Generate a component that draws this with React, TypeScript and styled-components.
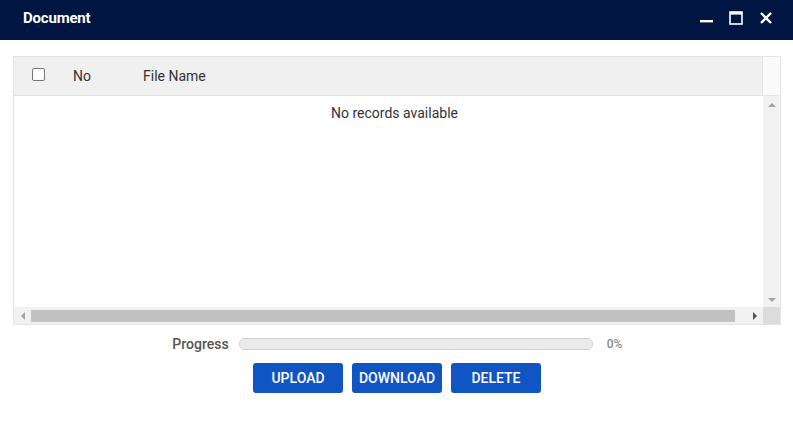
import styled, { createGlobalStyle } from "styled-components";

const GlobalStyle = createGlobalStyle`
  body {
    margin: 0;
    background: #ffffff;
    font-family: Roboto, "Liberation Sans", Arial, sans-serif;
  }
`;

const App = () => {
  return (
    <>
      <GlobalStyle />
      <Window>
        {/*--------------------------- Title bar -------------------------------- */}
        <TitleBar>
          <Title>Document</Title>
          <WindowActions>
            <ActionButton aria-label="minimize">
              <svg width="13" height="13" viewBox="0 0 13 13">
                <rect x="0" y="9" width="13" height="2.4" fill="#fff" />
              </svg>
            </ActionButton>
            <ActionButton aria-label="maximize">
              <svg width="14" height="14" viewBox="0 0 14 14">
                <rect x="1" y="1" width="12" height="12" fill="none" stroke="#fff" strokeWidth="1.6" />
                <rect x="1" y="1" width="12" height="2.6" fill="#fff" />
              </svg>
            </ActionButton>
            <ActionButton aria-label="close">
              <svg width="14" height="14" viewBox="0 0 14 14">
                <path d="M2 2 L12 12 M12 2 L2 12" stroke="#fff" strokeWidth="2.4" />
              </svg>
            </ActionButton>
          </WindowActions>
        </TitleBar>
        {/*--------------------------- Content -------------------------------- */}
        <Content>
          <Grid>
            <GridMain>
              <HeaderRow>
                <HeaderCell $width={46}>
                  <Checkbox />
                </HeaderCell>
                <HeaderCell $width={70}>No</HeaderCell>
                <HeaderCell>File Name</HeaderCell>
              </HeaderRow>
              <Body>
                <Empty>No records available</Empty>
              </Body>
              <HScroll>
                <ArrowLeft />
                <HThumb />
                <ArrowRight />
              </HScroll>
            </GridMain>
            <ScrollColumn>
              <ScrollHeader />
              <VScroll>
                <ArrowUp />
                <ArrowDown />
              </VScroll>
              <Corner />
            </ScrollColumn>
          </Grid>

          <ProgressRow>
            <ProgressLabel>Progress</ProgressLabel>
            <ProgressTrack>
              <ProgressFill style={{ width: "0%" }} />
            </ProgressTrack>
            <ProgressValue>0%</ProgressValue>
          </ProgressRow>

          <Buttons>
            <Button>UPLOAD</Button>
            <Button>DOWNLOAD</Button>
            <Button>DELETE</Button>
          </Buttons>
        </Content>
      </Window>
    </>
  );
};

export default App;

const Window = styled.div`
  width: 793px;
  height: 443px;
  background: #ffffff;
`;

const TitleBar = styled.div`
  height: 40px;
  background: #001541;
  display: flex;
  align-items: center;
  justify-content: space-between;
  padding: 0 20px 0 23px;
  box-sizing: border-box;
`;

const Title = styled.div`
  color: #ffffff;
  font-size: 15px;
  font-weight: 700;
  letter-spacing: -0.2px;
  margin-top: -5px;
`;

const WindowActions = styled.div`
  display: flex;
  align-items: center;
  gap: 16px;
  margin-top: -5px;
`;

const ActionButton = styled.div`
  display: flex;
  align-items: center;
  justify-content: center;
  width: 14px;
  height: 14px;
`;

const Content = styled.div`
  padding: 16px 12px 0 13px;
`;

const Grid = styled.div`
  display: flex;
  height: 269px;
  border: 1px solid #e4e4e4;
  box-sizing: border-box;
`;

const GridMain = styled.div`
  flex: 1;
  display: flex;
  flex-direction: column;
  min-width: 0;
`;

const HeaderRow = styled.div`
  height: 38px;
  display: flex;
  align-items: center;
  background: #f0f0f0;
  border-bottom: 1px solid #e0e0e0;
  color: #333333;
  font-size: 14px;
`;

const HeaderCell = styled.div<{ $width?: number }>`
  display: flex;
  align-items: center;
  justify-content: ${(p) => (p.$width === 46 ? "center" : "flex-start")};
  width: ${(p) => (p.$width ? `${p.$width}px` : "auto")};
  flex: ${(p) => (p.$width ? "none" : 1)};
  padding-left: ${(p) => (p.$width === 46 ? "2px" : "13px")};
  box-sizing: border-box;
`;

const Checkbox = styled.span`
  width: 11px;
  height: 11px;
  border: 1px solid #767676;
  border-radius: 2px;
  background: #ffffff;
  margin-top: -3px;
`;

const Body = styled.div`
  flex: 1;
  background: #ffffff;
`;

const Empty = styled.div`
  text-align: center;
  color: #333333;
  font-size: 14px;
  padding: 9px 0 0 12px;
`;

const HScroll = styled.div`
  height: 17px;
  background: #f1f1f1;
  display: flex;
  align-items: center;
`;

const HThumb = styled.div`
  height: 12px;
  margin: 0 18px 0 0;
  flex: 1;
  background: #c1c1c1;
`;

const ArrowLeft = styled.div`
  width: 0;
  height: 0;
  margin-left: 7px;
  border-top: 4px solid transparent;
  border-bottom: 4px solid transparent;
  border-right: 4px solid #a3a3a3;
  margin-right: 6px;
`;

const ArrowRight = styled.div`
  width: 0;
  height: 0;
  border-top: 4px solid transparent;
  border-bottom: 4px solid transparent;
  border-left: 4px solid #505050;
  margin-right: 6px;
`;

const ScrollColumn = styled.div`
  width: 17px;
  display: flex;
  flex-direction: column;
`;

const ScrollHeader = styled.div`
  height: 38px;
  background: #fafafa;
  border-left: 1px solid #e4e4e4;
  border-bottom: 1px solid #e4e4e4;
  box-sizing: content-box;
  margin-left: -1px;
`;

const VScroll = styled.div`
  flex: 1;
  background: #f1f1f1;
  display: flex;
  flex-direction: column;
  justify-content: space-between;
  align-items: center;
  padding: 7px 0 5px;
`;

const ArrowUp = styled.div`
  width: 0;
  height: 0;
  border-left: 4px solid transparent;
  border-right: 4px solid transparent;
  border-bottom: 4px solid #a3a3a3;
`;

const ArrowDown = styled.div`
  width: 0;
  height: 0;
  border-left: 4px solid transparent;
  border-right: 4px solid transparent;
  border-top: 4px solid #a3a3a3;
`;

const Corner = styled.div`
  height: 17px;
  background: #dcdcdc;
`;

const ProgressRow = styled.div`
  display: flex;
  align-items: center;
  justify-content: center;
  margin-top: 12px;
  height: 14px;
  padding-left: 5px;
`;

const ProgressLabel = styled.span`
  font-size: 14px;
  color: #555555;
  font-weight: 500;
  margin-right: 10px;
`;

const ProgressTrack = styled.div`
  width: 354px;
  height: 12px;
  border: 1px solid #cfcfcf;
  border-radius: 7px;
  background: #ebebeb;
  box-sizing: border-box;
  overflow: hidden;
`;

const ProgressFill = styled.div`
  height: 100%;
  background: #1155c5;
`;

const ProgressValue = styled.span`
  font-size: 12px;
  color: #888888;
  font-weight: 500;
  margin-left: 14px;
  width: 20px;
`;

const Buttons = styled.div`
  display: flex;
  justify-content: center;
  gap: 9px;
  margin-top: 12px;
`;

const Button = styled.button`
  width: 90px;
  height: 30px;
  border: none;
  border-radius: 3px;
  background: #1155c5;
  color: #ffffff;
  font-family: Roboto, "Liberation Sans", Arial, sans-serif;
  font-size: 14px;
  font-weight: 500;
  padding: 0;
  cursor: pointer;
`;
